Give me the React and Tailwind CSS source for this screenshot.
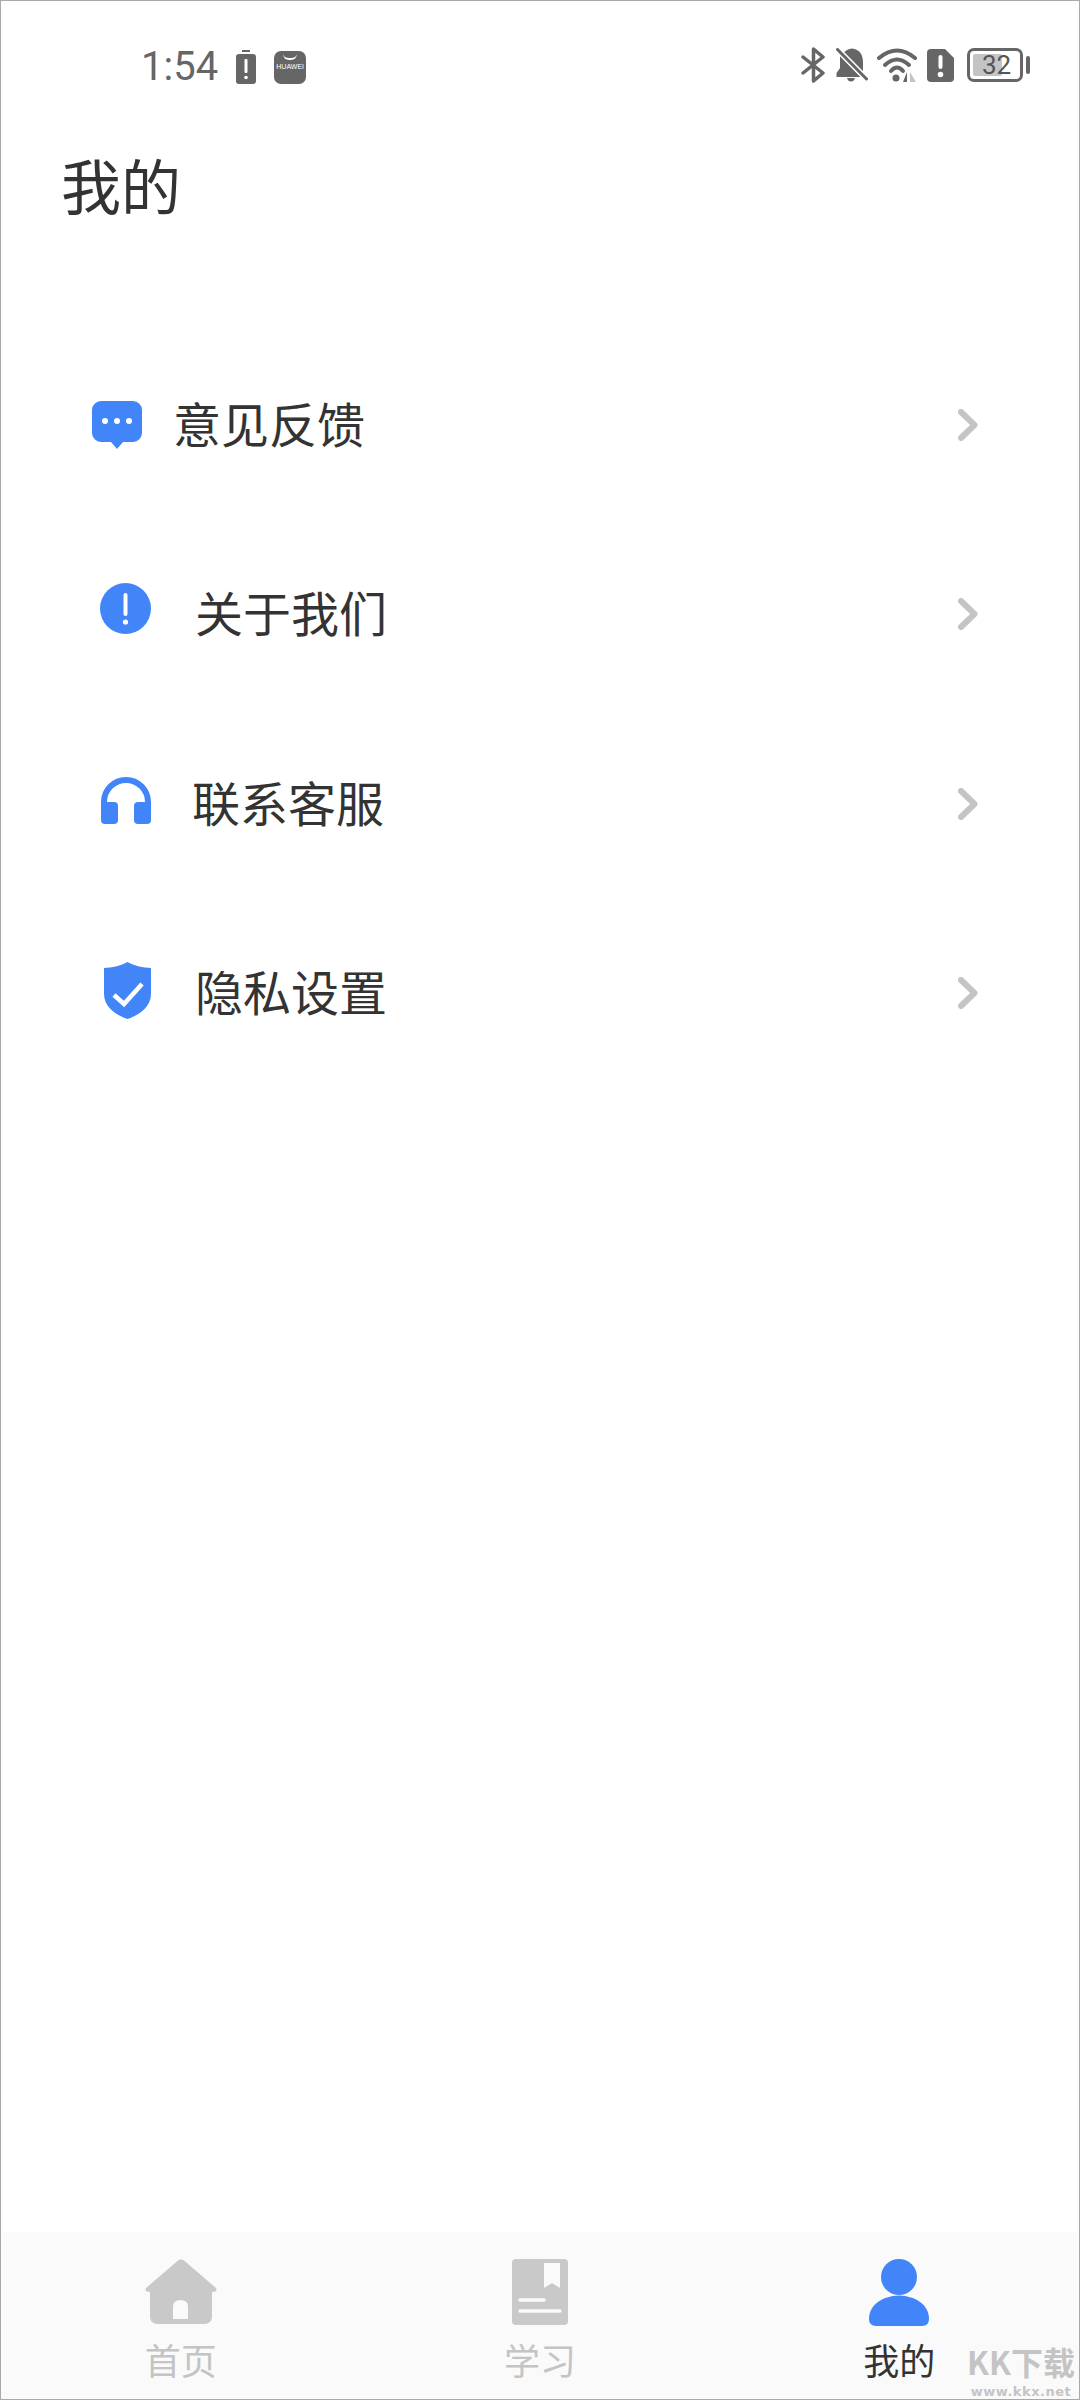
const cjk = "font-['Noto_Sans_CJK_SC','Noto_Sans',sans-serif]";

function Feedback() {
  return (
    <svg width="50" height="48" viewBox="0 0 50 48" className="block">
      <path d="M9 0H41A9 9 0 0 1 50 9V32A9 9 0 0 1 41 41H31L25 48L19 41H9A9 9 0 0 1 0 32V9A9 9 0 0 1 9 0Z" fill="#4285f9" />
      <circle cx="13" cy="20" r="3" fill="#fff" />
      <circle cx="25" cy="20" r="3" fill="#fff" />
      <circle cx="37" cy="20" r="3" fill="#fff" />
    </svg>
  );
}

function About() {
  return (
    <svg width="51" height="51" viewBox="0 0 51 51" className="block">
      <circle cx="25.5" cy="25.5" r="25.5" fill="#4285f9" />
      <rect x="23.5" y="10" width="4" height="23" rx="2" fill="#fff" />
      <circle cx="25.5" cy="39" r="2.6" fill="#fff" />
    </svg>
  );
}

function Headset() {
  return (
    <svg width="50" height="48" viewBox="0 0 50 48" className="block">
      <path d="M3 30V25A22 22 0 0 1 47 25V30" fill="none" stroke="#4285f9" strokeWidth="6" />
      <rect x="0" y="25" width="17" height="22" rx="4" fill="#4285f9" />
      <rect x="33" y="25" width="17" height="22" rx="4" fill="#4285f9" />
    </svg>
  );
}

function Shield() {
  return (
    <svg width="47" height="57" viewBox="0 0 47 57" className="block">
      <path d="M23.5 0C28 3 40 6 47 6V32C47 45 35 53 23.5 57C12 53 0 45 0 32V6C7 6 19 3 23.5 0Z" fill="#4285f9" />
      <path d="M10 33L20 42L38 22" fill="none" stroke="#fff" strokeWidth="4.5" />
    </svg>
  );
}

function Chevron() {
  return (
    <svg width="20" height="32" viewBox="0 0 20 32" className="block">
      <path d="M3 3L16.5 16L3 29" fill="none" stroke="#c4c4c4" strokeWidth="6" strokeLinecap="round" strokeLinejoin="round" />
    </svg>
  );
}

function Home() {
  return (
    <svg width="72" height="66" viewBox="0 0 72 66" className="block">
      <path d="M33 1.5Q36 -0.5 39 1.5L71 29Q73 33 67 33V57Q67 65 59 65H13Q5 65 5 57V33Q-1 33 1 29Z" fill="#c9c9c9" />
      <path d="M28 60V48Q28 41 35.5 41Q43 41 43 48V60Z" fill="#fafafa" />
    </svg>
  );
}

function Book() {
  return (
    <svg width="56" height="66" viewBox="0 0 56 66" className="block">
      <rect width="56" height="66" rx="4" fill="#c9c9c9" />
      <path d="M32 4H48V29L40 24L32 29Z" fill="#fafafa" />
      <path d="M8 41H32M8 52H48" stroke="#fafafa" strokeWidth="3.5" strokeLinecap="round" />
    </svg>
  );
}

function Person() {
  return (
    <svg width="60" height="68" viewBox="0 0 60 68" className="block">
      <circle cx="30" cy="18" r="18" fill="#4285f9" />
      <path d="M7 67Q0 67 0 60C0 46 13 37 30 36.500C47 37 60 46 60 60Q60 67 53 67Z" fill="#4285f9" />
    </svg>
  );
}

function BatteryAlert() {
  return (
    <svg width="20" height="34" viewBox="0 0 20 34" className="block">
      <rect x="6" y="0" width="8" height="2" fill="#666" />
      <rect x="0" y="4" width="20" height="30" rx="3" fill="#666" />
      <rect x="8.500" y="9" width="3" height="14" rx="1" fill="#fff" />
      <circle cx="10" cy="27.500" r="1.800" fill="#fff" />
    </svg>
  );
}

function Bluetooth() {
  return (
    <svg width="24" height="36" viewBox="0 0 24 36" className="block">
      <path d="M2 10L22 26L12.500 34V2L22 10L2 26" fill="none" stroke="#666" strokeWidth="3.500" strokeLinejoin="round" strokeLinecap="round" />
    </svg>
  );
}

function BellOff() {
  return (
    <svg width="32" height="34" viewBox="0 0 32 34" className="block">
      <path d="M11 2Q16 -1 21 2C26 5 27 10 27 15V24L7 5Z" fill="#666" />
      <path d="M4 7V20L0.500 25V29H25Z" fill="#666" />
      <path d="M11 30H19Q18 33.500 15 33.500Q12 33.500 11 30Z" fill="#666" />
      <path d="M1.500 1.500L30.500 31" stroke="#fff" strokeWidth="6" />
      <path d="M1.500 1.500L30.500 31" stroke="#666" strokeWidth="3" strokeLinecap="round" />
    </svg>
  );
}

function Wifi() {
  return (
    <svg width="42" height="36" viewBox="0 0 42 36" className="block">
      <path d="M2 11Q20 -4 38 11" fill="none" stroke="#666" strokeWidth="4" strokeLinecap="round" />
      <path d="M8 18Q20 7 32 18" fill="none" stroke="#666" strokeWidth="4" strokeLinecap="round" />
      <path d="M14 24Q20 17 26 24" fill="none" stroke="#666" strokeWidth="4" strokeLinecap="round" />
      <circle cx="19" cy="31" r="3.500" fill="#666" />
      <path d="M30 25V35H26Z" fill="#666" />
      <path d="M33 25V35H39Z" fill="#c4c4c4" />
    </svg>
  );
}

function SimAlert() {
  return (
    <svg width="27" height="33" viewBox="0 0 27 33" className="block">
      <path d="M4 0H18L27 9V29Q27 33 23 33H4Q0 33 0 29V4Q0 0 4 0Z" fill="#666" />
      <rect x="11.500" y="6" width="4" height="14" rx="2" fill="#fff" />
      <circle cx="13.500" cy="25.500" r="2.800" fill="#fff" />
    </svg>
  );
}

const menu = [
  { label: '意见反馈', Icon: Feedback, pad: 'pl-[91px]', gap: 'ml-[31px]', lift: 'mb-0' },
  { label: '关于我们', Icon: About, pad: 'pl-[99px]', gap: 'ml-[44px]', lift: 'mb-[12px]' },
  { label: '联系客服', Icon: Headset, pad: 'pl-[100px]', gap: 'ml-[41px]', lift: 'mb-[6px]' },
  { label: '隐私设置', Icon: Shield, pad: 'pl-[103px]', gap: 'ml-[44px]', lift: 'mb-[6px]' },
];

const tabs = [
  { label: '首页', Icon: Home, color: 'text-[#c4c4c4]' },
  { label: '学习', Icon: Book, color: 'text-[#c4c4c4]' },
  { label: '我的', Icon: Person, color: 'text-[#333333]' },
];

export default function App() {
  return (
    <div className={`relative flex h-[2400px] w-[1080px] flex-col overflow-hidden border border-[#a9a9a9] bg-white ${cjk}`}>
      {/* status bar */}
      <div className="flex h-[126px] items-start pt-[46px]">
        <div className="flex items-center pl-[140px]">
          <span className="font-['Roboto',sans-serif] text-[40px] leading-[40px] text-[#666666]">1:54</span>
          <div className="ml-[18px]"><BatteryAlert /></div>
          <div className="ml-[18px] flex h-[33px] w-[32px] flex-col items-center overflow-hidden rounded-[7px] bg-[#666666]">
            <div className="mt-[3px] h-[6px] w-[14px] rounded-b-full border-b-2 border-white" />
            <span className="mt-[3px] font-['Liberation_Sans',sans-serif] text-[7px] leading-[8px] text-white">HUAWEI</span>
          </div>
        </div>
        <div className="ml-auto flex items-center pr-[49px]">
          <Bluetooth />
          <div className="ml-[11px]"><BellOff /></div>
          <div className="ml-[9px]"><Wifi /></div>
          <div className="ml-[8px]"><SimAlert /></div>
          <div className="relative ml-[13px] h-[34px] w-[56px] rounded-[7px] border-[3px] border-[#666666]">
            <div className="absolute bottom-[3px] left-[3px] top-[3px] w-[29px] rounded-[2px] bg-[#c4c4c4]" />
            <span className="absolute left-[12px] top-0 font-['Roboto',sans-serif] text-[26px] leading-[28px] text-[#555555]">32</span>
          </div>
          <div className="ml-[3px] h-[18px] w-[4px] rounded-full bg-[#666666]" />
        </div>
      </div>

      {/* title */}
      <h1 className="pl-[60px] text-[60px] font-normal leading-[114px] text-[#333333]">我的</h1>

      {/* menu */}
      <div className="mt-[89px] flex flex-col">
        {menu.map(({ label, Icon, pad, gap, lift }) => (
          <div key={label} className={`flex h-[189.5px] items-center pr-[101px] ${pad}`}>
            <div className={lift}><Icon /></div>
            <span className={`mb-[6px] text-[48px] leading-[60px] text-[#333333] ${gap}`}>{label}</span>
            <div className="ml-auto"><Chevron /></div>
          </div>
        ))}
      </div>

      {/* bottom tabs */}
      <div className="mt-auto grid h-[167px] grid-cols-3 bg-[#fafafa] pt-[27px]">
        {tabs.map(({ label, Icon, color }) => (
          <div key={label} className="flex flex-col items-center">
            <div className="flex h-[68px] items-start"><Icon /></div>
            <span className={`mt-[10px] text-[36px] leading-[44px] ${color}`}>{label}</span>
          </div>
        ))}
      </div>

      {/* watermark */}
      <div className="absolute bottom-0 right-0 flex w-[116px] flex-col items-center">
        <span className="text-[32px] font-bold leading-[34px] text-[#c4c4c4]">KK下载</span>
        <span className="mt-[6px] font-['DejaVu_Sans',sans-serif] text-[13px] font-bold leading-[15px] tracking-[0.5px] text-[#c4c4c4]">www.kkx.net</span>
      </div>
    </div>
  );
}
